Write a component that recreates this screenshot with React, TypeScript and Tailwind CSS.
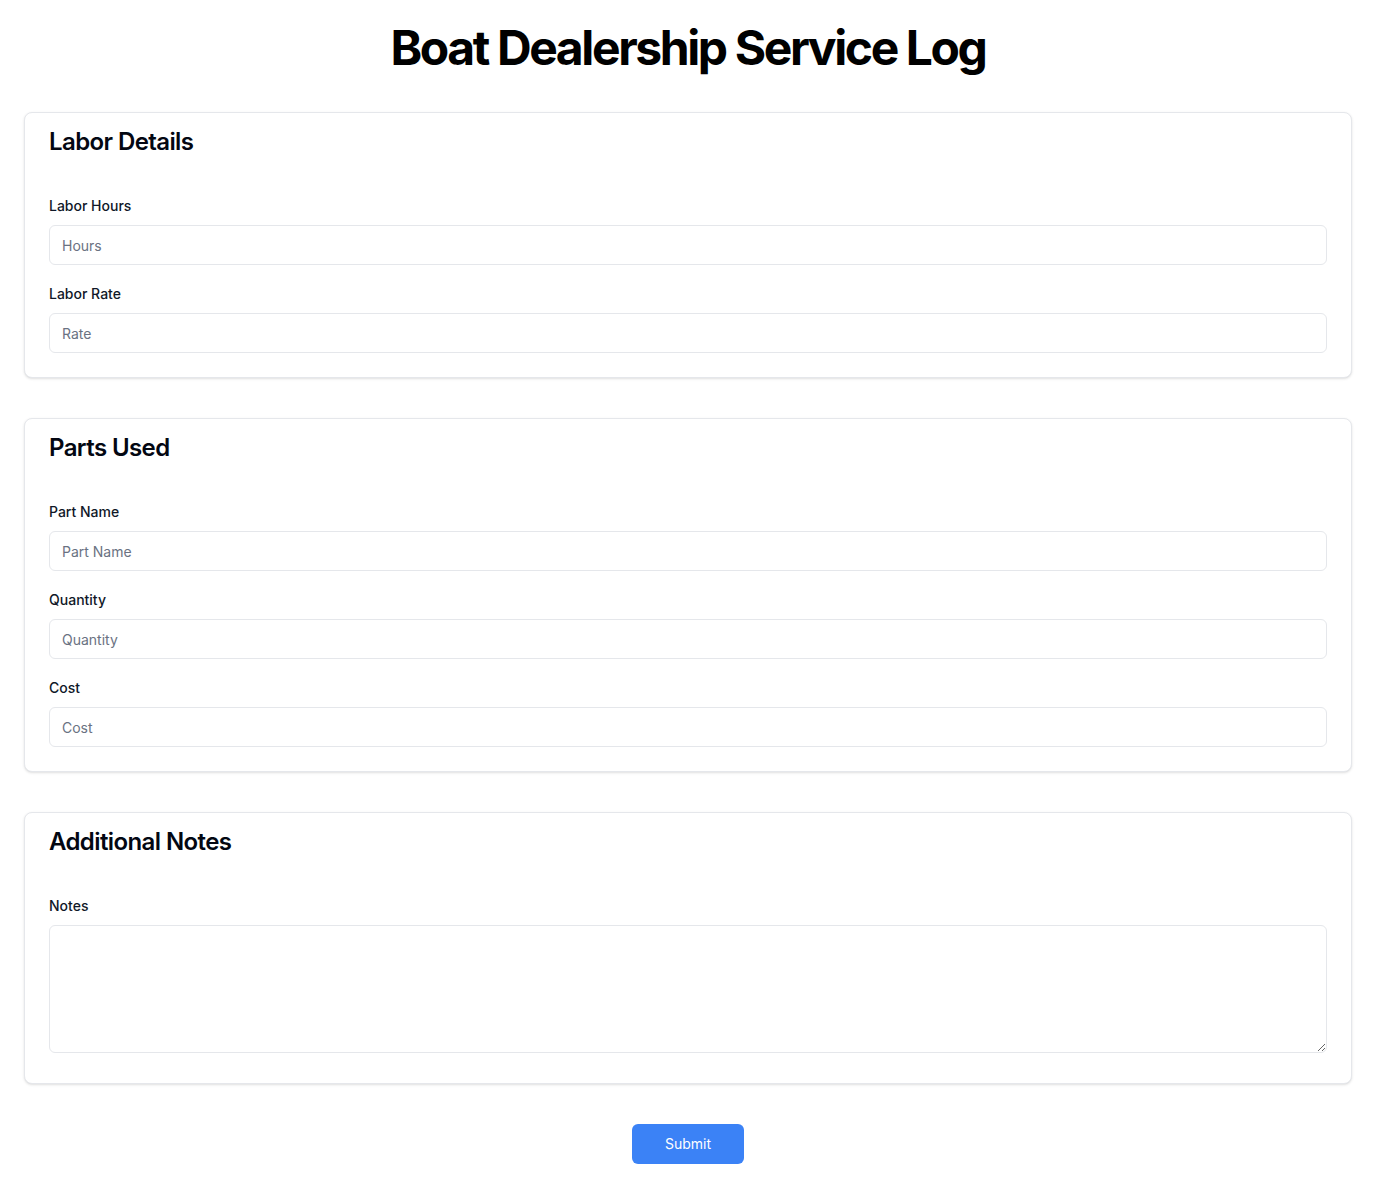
import type { ReactNode } from 'react'

function Section({ title, children }: { title: string; children: ReactNode }) {
  return (
    <section className="bg-white rounded-lg border border-gray-200 shadow-sm px-6 pt-[13px] pb-6">
      <h2 className="text-2xl font-semibold tracking-tight text-gray-950 mb-[38px]">{title}</h2>
      <div className="flex flex-col gap-[19px]">{children}</div>
    </section>
  )
}

function Field({ label, placeholder }: { label: string; placeholder: string }) {
  return (
    <div>
      <label className="block text-sm font-medium text-gray-900 mb-[9px]">{label}</label>
      <input
        type="text"
        placeholder={placeholder}
        className="w-full h-10 rounded-md border border-gray-200 px-3 text-sm text-gray-900 placeholder:text-gray-500 outline-none"
      />
    </div>
  )
}

export default function App() {
  return (
    <div className="min-h-screen bg-white px-6 pt-6 pb-10 font-['Inter',sans-serif]">
      <h1 className="text-5xl font-bold tracking-tighter text-center text-black mb-10">
        Boat Dealership Service Log
      </h1>

      <div className="flex flex-col gap-10">
        <Section title="Labor Details">
          <Field label="Labor Hours" placeholder="Hours" />
          <Field label="Labor Rate" placeholder="Rate" />
        </Section>

        <Section title="Parts Used">
          <Field label="Part Name" placeholder="Part Name" />
          <Field label="Quantity" placeholder="Quantity" />
          <Field label="Cost" placeholder="Cost" />
        </Section>

        <Section title="Additional Notes">
          <div>
            <label className="block text-sm font-medium text-gray-900 mb-[9px]">Notes</label>
            {/* inline textarea keeps the baseline gap under it */}
            <textarea className="w-full h-32 rounded-md border border-gray-200 px-3 py-2 text-sm outline-none" />
          </div>
        </Section>
      </div>

      <div className="flex justify-center mt-10">
        <button className="w-28 h-10 rounded-md bg-[#3b82f6] text-white text-sm">
          Submit
        </button>
      </div>
    </div>
  )
}
